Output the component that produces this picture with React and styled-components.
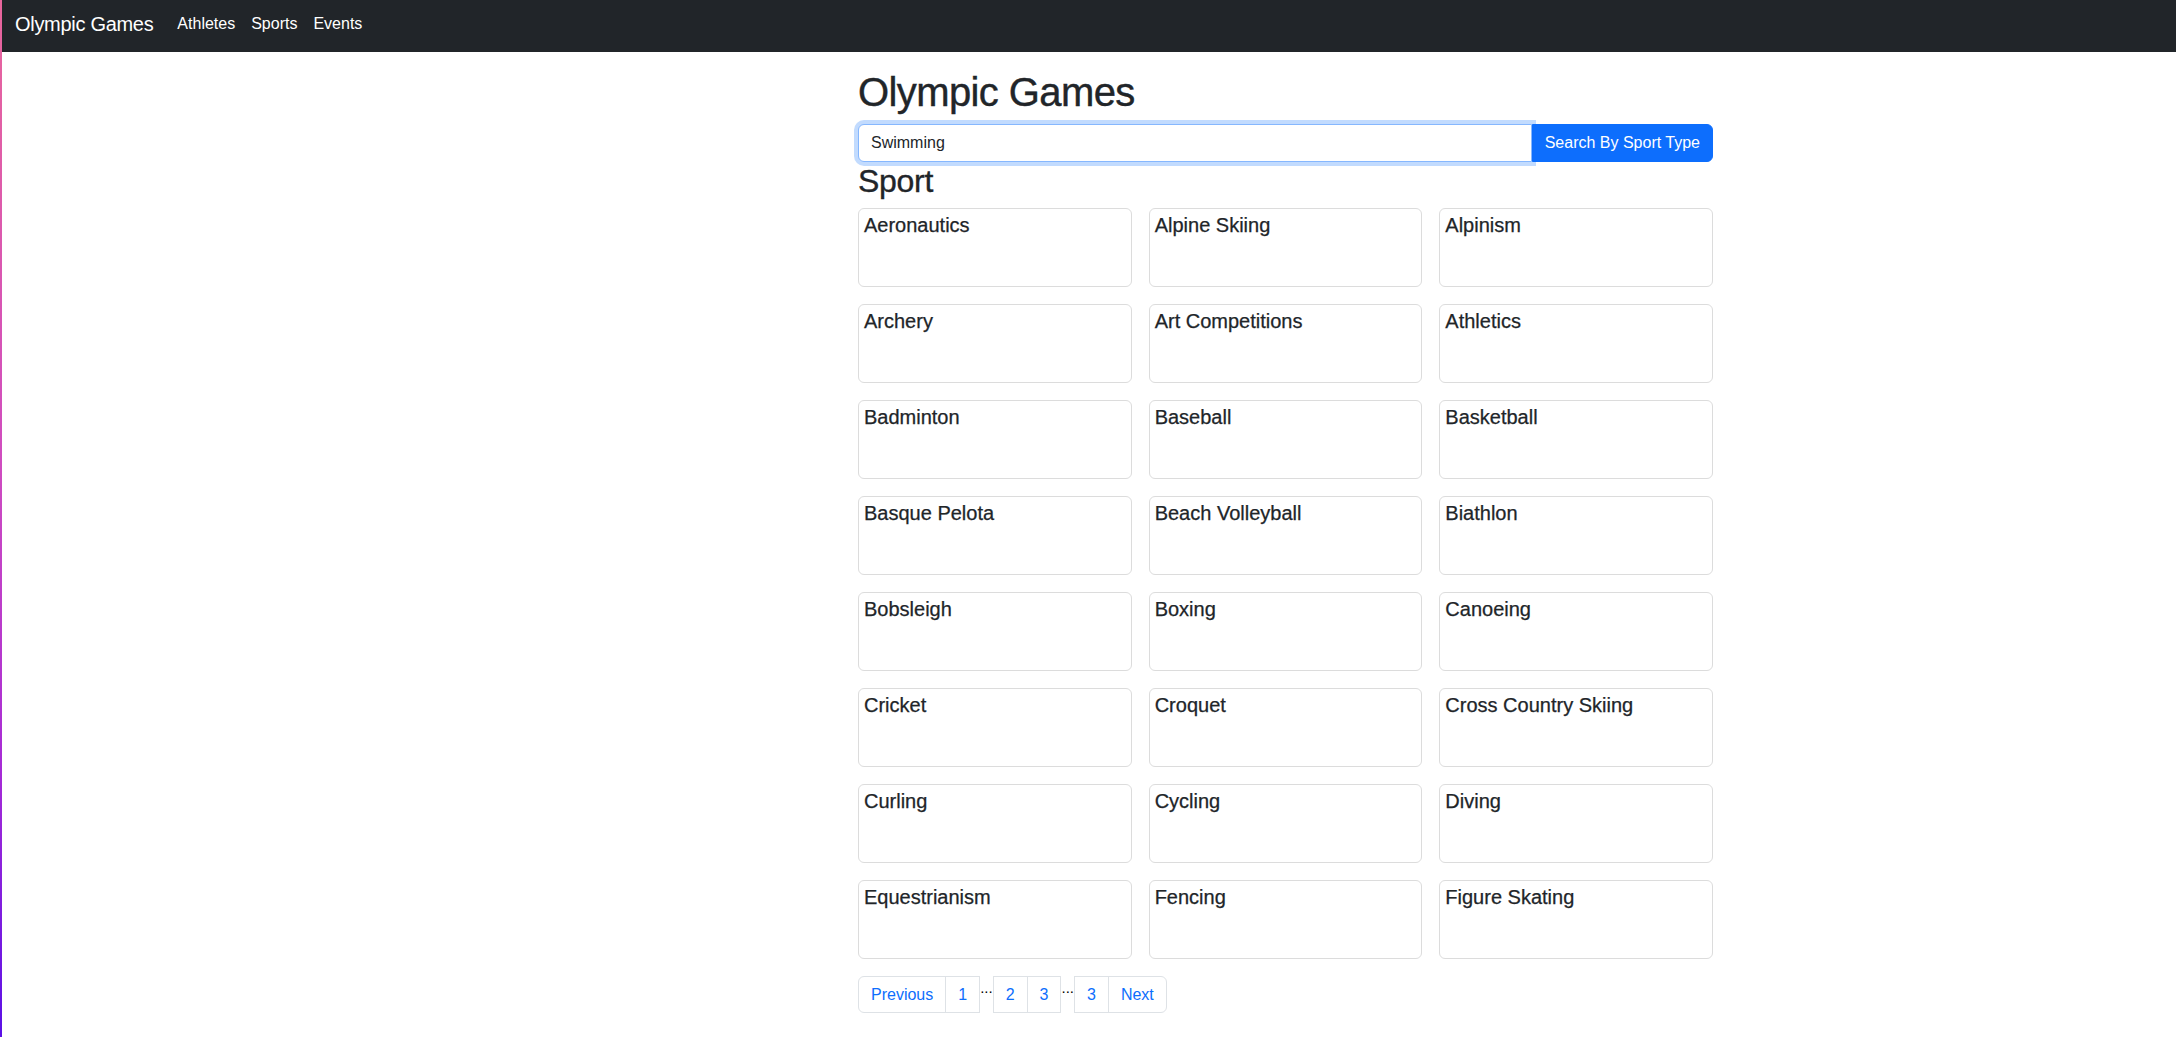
import React, { useState } from "react";
import styled, { createGlobalStyle } from "styled-components";

const GlobalStyle = createGlobalStyle`
  * {
    box-sizing: border-box;
  }
  body {
    margin: 0;
    background: #fff;
    font-family: "Liberation Sans", Arial, Helvetica, sans-serif;
    color: #212529;
  }
`;

const Page = styled.div`
  min-height: 100vh;
  border-left: 2px solid;
  border-image: linear-gradient(180deg, #e8669c 0%, #cf4cc0 45%, #a52ad6 75%, #5a10e6 100%) 1;
`;

const Navbar = styled.nav`
  display: flex;
  align-items: center;
  height: 52px;
  padding: 0 13px 4px;
  background: #212529;
`;

const Brand = styled.a`
  margin-right: 16px;
  font-size: 20px;
  letter-spacing: -0.3px;
  color: #fff;
  text-decoration: none;
`;

const NavLink = styled.a`
  padding: 0 8px;
  font-size: 16px;
  color: #fff;
  text-decoration: none;
`;

const Content = styled.main`
  width: 855px;
  margin-left: 856px;
  padding-top: 16px;
`;

const Title = styled.h1`
  margin: 0 0 8px;
  font-size: 40px;
  font-weight: 500;
  line-height: 1.2;
  letter-spacing: -0.6px;
  -webkit-text-stroke: 0.4px #212529;
`;

const SearchGroup = styled.form`
  display: flex;
  height: 38px;
`;

const SearchInput = styled.input`
  flex: 1;
  min-width: 0;
  padding: 6px 12px;
  font: inherit;
  font-size: 16px;
  color: #212529;
  border: 1px solid #86b7fe;
  border-radius: 6px 0 0 6px;
  box-shadow: 0 0 0 4px rgba(13, 110, 253, 0.25);
  outline: none;
  position: relative;
  z-index: 1;
`;

const SearchButton = styled.button`
  padding: 6px 12px;
  font: inherit;
  font-size: 16px;
  color: #fff;
  background: #0d6efd;
  border: 1px solid #0d6efd;
  border-radius: 0 6px 6px 0;
  cursor: pointer;
  position: relative;
  z-index: 2;
`;

const SectionTitle = styled.h2`
  margin: 0 0 8px;
  font-size: 32px;
  font-weight: 500;
  line-height: 1.2;
  letter-spacing: -0.3px;
  -webkit-text-stroke: 0.35px #212529;
`;

const Grid = styled.div`
  display: grid;
  grid-template-columns: repeat(3, 1fr);
  gap: 17px;
`;

const Card = styled.div`
  height: 79px;
  padding: 4px 5px;
  border: 1px solid #dcdcdc;
  border-radius: 6px;
`;

const CardTitle = styled.h5`
  margin: 0;
  font-size: 20px;
  font-weight: 500;
  line-height: 1.2;
  -webkit-text-stroke: 0.25px #212529;
`;

const Pagination = styled.ul`
  display: flex;
  margin: 17px 0 0;
  padding: 0;
  list-style: none;
`;

const PageItem = styled.li`
  font-size: 16px;
  line-height: 1.5;
`;

const PageLink = styled.a`
  display: block;
  height: 37px;
  padding: 6px 12px;
  color: #0d6efd;
  text-decoration: none;
  border: 1px solid #dee2e6;
  margin-left: ${(p) => (p.$joined ? "-1px" : "0")};
  border-radius: ${(p) =>
    p.$first ? "6px 0 0 6px" : p.$last ? "0 6px 6px 0" : "0"};
`;

const Ellipsis = styled.li`
  font-size: 15px;
  line-height: 1.6;
  color: #000;
`;

const sports = [
  "Aeronautics",
  "Alpine Skiing",
  "Alpinism",
  "Archery",
  "Art Competitions",
  "Athletics",
  "Badminton",
  "Baseball",
  "Basketball",
  "Basque Pelota",
  "Beach Volleyball",
  "Biathlon",
  "Bobsleigh",
  "Boxing",
  "Canoeing",
  "Cricket",
  "Croquet",
  "Cross Country Skiing",
  "Curling",
  "Cycling",
  "Diving",
  "Equestrianism",
  "Fencing",
  "Figure Skating",
];

const App = () => {
  const [query, setQuery] = useState("Swimming");

  return (
    <Page>
      <GlobalStyle />
      <Navbar>
        <Brand href="#">Olympic Games</Brand>
        <NavLink href="#">Athletes</NavLink>
        <NavLink href="#">Sports</NavLink>
        <NavLink href="#">Events</NavLink>
      </Navbar>
      <Content>
        <Title>Olympic Games</Title>
        <SearchGroup onSubmit={(e) => e.preventDefault()}>
          <SearchInput
            type="text"
            value={query}
            onChange={(e) => setQuery(e.target.value)}
          />
          <SearchButton type="submit">Search By Sport Type</SearchButton>
        </SearchGroup>
        <SectionTitle>Sport</SectionTitle>
        <Grid>
          {sports.map((name) => (
            <Card key={name}>
              <CardTitle>{name}</CardTitle>
            </Card>
          ))}
        </Grid>
        <Pagination>
          <PageItem>
            <PageLink href="#" $first>
              Previous
            </PageLink>
          </PageItem>
          <PageItem>
            <PageLink href="#" $joined>
              1
            </PageLink>
          </PageItem>
          <Ellipsis>...</Ellipsis>
          <PageItem>
            <PageLink href="#">2</PageLink>
          </PageItem>
          <PageItem>
            <PageLink href="#" $joined>
              3
            </PageLink>
          </PageItem>
          <Ellipsis>...</Ellipsis>
          <PageItem>
            <PageLink href="#">3</PageLink>
          </PageItem>
          <PageItem>
            <PageLink href="#" $joined $last>
              Next
            </PageLink>
          </PageItem>
        </Pagination>
      </Content>
    </Page>
  );
};

export default App;
